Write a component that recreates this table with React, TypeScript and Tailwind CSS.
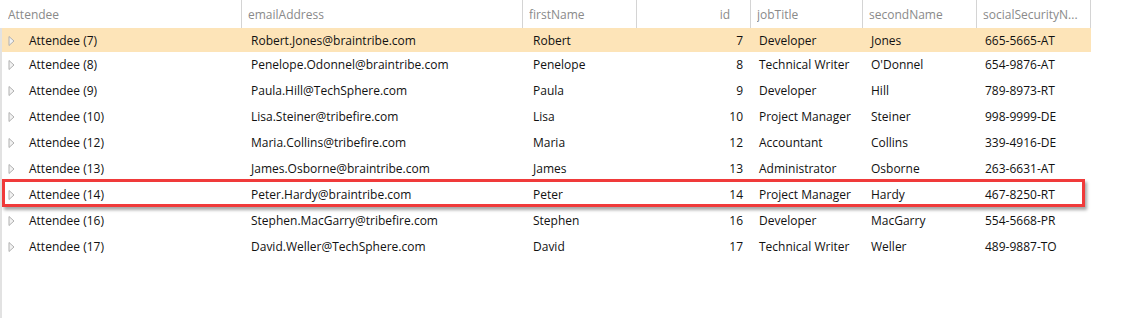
import React from 'react';

interface Attendee {
  name: string;
  email: string;
  firstName: string;
  id: number;
  jobTitle: string;
  secondName: string;
  ssn: string;
}

const attendees: Attendee[] = [
  { name: 'Attendee (7)', email: 'Robert.Jones@braintribe.com', firstName: 'Robert', id: 7, jobTitle: 'Developer', secondName: 'Jones', ssn: '665-5665-AT' },
  { name: 'Attendee (8)', email: 'Penelope.Odonnel@braintribe.com', firstName: 'Penelope', id: 8, jobTitle: 'Technical Writer', secondName: "O'Donnel", ssn: '654-9876-AT' },
  { name: 'Attendee (9)', email: 'Paula.Hill@TechSphere.com', firstName: 'Paula', id: 9, jobTitle: 'Developer', secondName: 'Hill', ssn: '789-8973-RT' },
  { name: 'Attendee (10)', email: 'Lisa.Steiner@tribefire.com', firstName: 'Lisa', id: 10, jobTitle: 'Project Manager', secondName: 'Steiner', ssn: '998-9999-DE' },
  { name: 'Attendee (12)', email: 'Maria.Collins@tribefire.com', firstName: 'Maria', id: 12, jobTitle: 'Accountant', secondName: 'Collins', ssn: '339-4916-DE' },
  { name: 'Attendee (13)', email: 'James.Osborne@braintribe.com', firstName: 'James', id: 13, jobTitle: 'Administrator', secondName: 'Osborne', ssn: '263-6631-AT' },
  { name: 'Attendee (14)', email: 'Peter.Hardy@braintribe.com', firstName: 'Peter', id: 14, jobTitle: 'Project Manager', secondName: 'Hardy', ssn: '467-8250-RT' },
  { name: 'Attendee (16)', email: 'Stephen.MacGarry@tribefire.com', firstName: 'Stephen', id: 16, jobTitle: 'Developer', secondName: 'MacGarry', ssn: '554-5668-PR' },
  { name: 'Attendee (17)', email: 'David.Weller@TechSphere.com', firstName: 'David', id: 17, jobTitle: 'Technical Writer', secondName: 'Weller', ssn: '489-9887-TO' },
];

const cols = 'grid grid-cols-[240px_281px_114px_114px_112px_114px_114px]';

const Expander = () => (
  <svg width="7" height="10" viewBox="0 0 7 10" className="shrink-0">
    <path d="M1 0.5 L6 5 L1 9.5 Z" fill="#f2f2f2" stroke="#b0b0b0" strokeWidth="1" />
  </svg>
);

const HeaderCell = ({ label, right }: { label: string; right?: boolean }) => (
  <div
    className={`flex items-center h-[28px] pt-[2px] border-r border-[#d4d4d4] ${right ? 'justify-end pr-[20px]' : 'pl-[6px]'}`}
  >
    <span className="truncate">{label}</span>
  </div>
);

export default function App() {
  return (
    <div
      className="relative w-[1136px] h-[318px] bg-white overflow-hidden text-[12px]"
      style={{ fontFamily: '"Open Sans", "Liberation Sans", sans-serif' }}
    >
      {/* Header */}
      <div className={`${cols} pl-[2px] text-[#8a8a8a]`}>
        <HeaderCell label="Attendee" />
        <HeaderCell label="emailAddress" />
        <HeaderCell label="firstName" />
        <HeaderCell label="id" right />
        <HeaderCell label="jobTitle" />
        <HeaderCell label="secondName" />
        <HeaderCell label="socialSecurityN..." />
      </div>

      {/* Body */}
      <div className="border-l-2 border-[#e2e2e2] h-[290px] text-[#111]">
        {attendees.map((a, i) => (
          <div
            key={a.id}
            className={`${cols} w-[1089px] items-center ${i === 0 ? 'h-[24px] pt-[1px] bg-[#fde4b8]' : 'h-[26px]'}`}
          >
            <div className="flex items-center gap-[14px] pl-[6px]">
              <Expander />
              <span>{a.name}</span>
            </div>
            <div className="pl-[9px] truncate">{a.email}</div>
            <div className="pl-[10px]">{a.firstName}</div>
            <div className="text-right pr-[8px]">{a.id}</div>
            <div className="pl-[8px] truncate">{a.jobTitle}</div>
            <div className="pl-[8px]">{a.secondName}</div>
            <div className="pl-[8px]">{a.ssn}</div>
          </div>
        ))}
      </div>

      {/* Annotation highlight */}
      <div className="absolute left-[2px] top-[179px] w-[1083px] h-[28px] border-[3px] border-[#f03a3a] shadow-[2px_3px_3px_rgba(0,0,0,0.35)] pointer-events-none" />
    </div>
  );
}
